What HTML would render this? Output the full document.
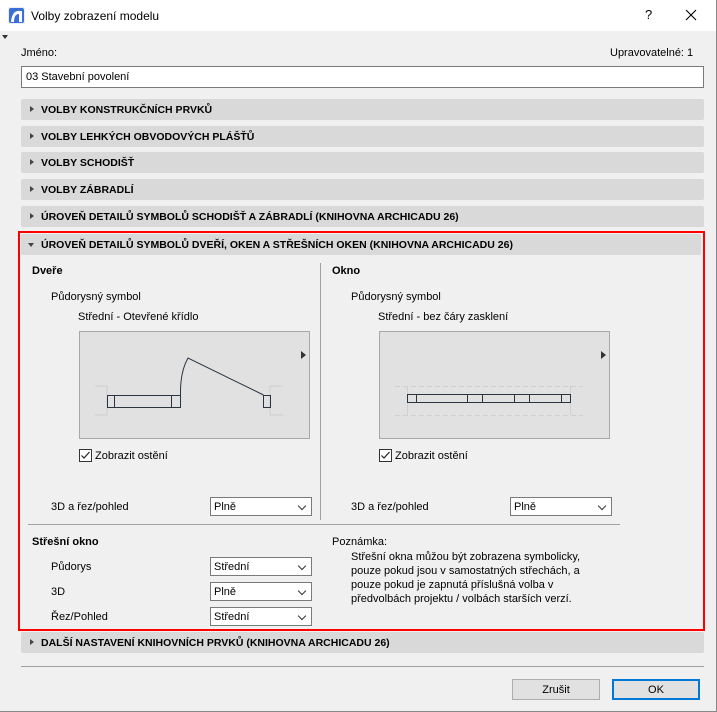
<!DOCTYPE html>
<html><head><meta charset="utf-8"><style>
*{margin:0;padding:0;box-sizing:border-box}
body{width:717px;height:712px;background:#f0f0f0;font-family:"Liberation Sans",sans-serif;font-size:11px;color:#000;position:relative;overflow:hidden}
.a{position:absolute;white-space:nowrap;line-height:16px}
.t{line-height:14px}
.hd{position:absolute;left:21px;width:683px;height:21px;background:#d9d9d9;border-radius:2px;font-weight:bold;font-size:10.5px;line-height:23px;padding-left:20px}
.hd:before{content:"";position:absolute;left:9px;top:7px;border-left:4px solid #444;border-top:3.5px solid transparent;border-bottom:3.5px solid transparent}
.hd.o:before{left:7px;top:9px;border-top:4px solid #444;border-left:3.5px solid transparent;border-right:3.5px solid transparent;border-bottom:0}
.sel{position:absolute;width:102px;height:19px;background:#fff;border:1px solid #7a7a7a;padding-left:3px;line-height:19px}
.sel:after{content:"";position:absolute;right:6px;top:5px;width:5px;height:5px;border-right:1px solid #333;border-bottom:1px solid #333;transform:rotate(45deg)}
.btn{position:absolute;height:21px;background:#e1e1e1;border:1px solid #adadad;text-align:center;line-height:20px}
</style></head><body>
<div class="a" style="left:0;top:0;width:717px;height:31px;background:#fff"></div>
<svg class="a" style="left:8px;top:7px" width="17" height="17"><rect width="17" height="17" rx="2" fill="#e8eef8"/><rect x="1" y="1" width="15" height="15" rx="2" fill="#3b6fd6"/><path d="M3 15 Q4 3 12 4 L14 4 L14 15 L11 15 L11 7 Q6 7 6 15Z" fill="#fff"/></svg>
<div class="a" style="left:31px;top:8px;font-size:12px">Volby zobrazení modelu</div>
<div class="a" style="left:645px;top:7px;font-size:13px">?</div>
<svg class="a" style="left:685px;top:9px" width="12" height="12"><path d="M1 1L11 11M11 1L1 11" stroke="#000" stroke-width="1.1"/></svg>
<div class="a" style="left:716px;top:0;width:1px;height:712px;background:#888"></div>
<div class="a" style="left:0;top:711px;width:717px;height:1px;background:#888"></div>
<div class="a" style="left:2px;top:35px;border-top:4px solid #333;border-left:3px solid transparent;border-right:3px solid transparent"></div>

<div class="a" style="left:21px;top:45px">Jméno:</div>
<div class="a" style="left:610px;top:45px">Upravovatelné: 1</div>
<div class="a" style="left:21px;top:66px;width:683px;height:22px;background:#fff;border:1px solid #7a7a7a;padding-left:4px;line-height:21px">03 Stavební povolení</div>

<div class="hd" style="top:99px">VOLBY KONSTRUKČNÍCH PRVKŮ</div>
<div class="hd" style="top:126px">VOLBY LEHKÝCH OBVODOVÝCH PLÁŠŤŮ</div>
<div class="hd" style="top:152px">VOLBY SCHODIŠŤ</div>
<div class="hd" style="top:179px">VOLBY ZÁBRADLÍ</div>
<div class="hd" style="top:206px">ÚROVEŇ DETAILŮ SYMBOLŮ SCHODIŠŤ A ZÁBRADLÍ (KNIHOVNA ARCHICADU 26)</div>
<div class="a" style="left:18px;top:231px;width:687px;height:400px;border:2px solid #f00"></div>
<div class="hd o" style="top:234px;width:680px">ÚROVEŇ DETAILŮ SYMBOLŮ DVEŘÍ, OKEN A STŘEŠNÍCH OKEN (KNIHOVNA ARCHICADU 26)</div>

<div class="a" style="left:32px;top:263px;font-weight:bold">Dveře</div>
<div class="a" style="left:332px;top:263px;font-weight:bold">Okno</div>
<div class="a" style="left:320px;top:263px;width:1px;height:257px;background:#a0a0a0"></div>
<div class="a" style="left:51px;top:289px">Půdorysný symbol</div>
<div class="a" style="left:351px;top:289px">Půdorysný symbol</div>
<div class="a" style="left:78px;top:309px">Střední - Otevřené křídlo</div>
<div class="a" style="left:378px;top:309px">Střední - bez čáry zasklení</div>

<svg class="a" style="left:79px;top:331px" width="231" height="108">
<rect x="0.5" y="0.5" width="230" height="107" fill="#e1e1e1" stroke="#a8a8a8"/>
<path d="M16 55H28V84H16M204 55H191V84H204" fill="none" stroke="#cfcfcf"/>
<rect x="28.5" y="64.5" width="73" height="12" fill="none" stroke="#2a3540"/>
<path d="M35.5 64V77M92.5 64V77" stroke="#2a3540"/>
<path d="M101.5 64 Q101 41 109 27 L184.5 64" fill="none" stroke="#2a3540"/>
<rect x="184.5" y="64.5" width="7" height="12" fill="none" stroke="#2a3540"/>
<path d="M222 20L227 24L222 28Z" fill="#333"/>
</svg>
<svg class="a" style="left:379px;top:331px" width="231" height="108">
<rect x="0.5" y="0.5" width="230" height="107" fill="#e1e1e1" stroke="#a8a8a8"/>
<path d="M16 55.5H204M16 84.5H204" stroke="#cfcfcf" stroke-dasharray="5 3"/>
<path d="M28.5 55V84M191.5 55V84" stroke="#cfcfcf"/>
<rect x="28.5" y="63.5" width="163" height="8" fill="none" stroke="#2a3540"/>
<path d="M37.5 63V72M88.5 63V72M103.5 63V72M135.5 63V72M150.5 63V72M182.5 63V72" stroke="#2a3540"/>
<path d="M222 20L227 24L222 28Z" fill="#333"/>
</svg>

<svg class="a" style="left:79px;top:449px" width="13" height="13"><rect x="0.5" y="0.5" width="12" height="12" fill="#fff" stroke="#333"/><path d="M2.5 6.5L5 9L10.5 3" fill="none" stroke="#222" stroke-width="1.2"/></svg>
<div class="a" style="left:95px;top:448px">Zobrazit ostění</div>
<svg class="a" style="left:379px;top:449px" width="13" height="13"><rect x="0.5" y="0.5" width="12" height="12" fill="#fff" stroke="#333"/><path d="M2.5 6.5L5 9L10.5 3" fill="none" stroke="#222" stroke-width="1.2"/></svg>
<div class="a" style="left:395px;top:448px">Zobrazit ostění</div>

<div class="a" style="left:51px;top:499px">3D a řez/pohled</div>
<div class="sel" style="left:210px;top:497px">Plně</div>
<div class="a" style="left:351px;top:499px">3D a řez/pohled</div>
<div class="sel" style="left:510px;top:497px">Plně</div>
<div class="a" style="left:28px;top:524px;width:592px;height:1px;background:#a0a0a0"></div>

<div class="a" style="left:32px;top:534px;font-weight:bold">Střešní okno</div>
<div class="a" style="left:51px;top:559px">Půdorys</div>
<div class="sel" style="left:210px;top:557px">Střední</div>
<div class="a" style="left:51px;top:584px">3D</div>
<div class="sel" style="left:210px;top:582px">Plně</div>
<div class="a" style="left:51px;top:609px">Řez/Pohled</div>
<div class="sel" style="left:210px;top:607px">Střední</div>

<div class="a" style="left:332px;top:534px">Poznámka:</div>
<div class="a t" style="left:351px;top:550px">Střešní okna můžou být zobrazena symbolicky,<br>pouze pokud jsou v samostatných střechách, a<br>pouze pokud je zapnutá příslušná volba v<br>předvolbách projektu / volbách starších verzí.</div>

<div class="hd" style="top:632px">DALŠÍ NASTAVENÍ KNIHOVNÍCH PRVKŮ (KNIHOVNA ARCHICADU 26)</div>
<div class="a" style="left:21px;top:666px;width:683px;height:1px;background:#a0a0a0"></div>
<div class="btn" style="left:512px;top:679px;width:88px">Zrušit</div>
<div class="btn" style="left:612px;top:679px;width:88px;border:2px solid #0078d7;line-height:18px">OK</div>
</body></html>
